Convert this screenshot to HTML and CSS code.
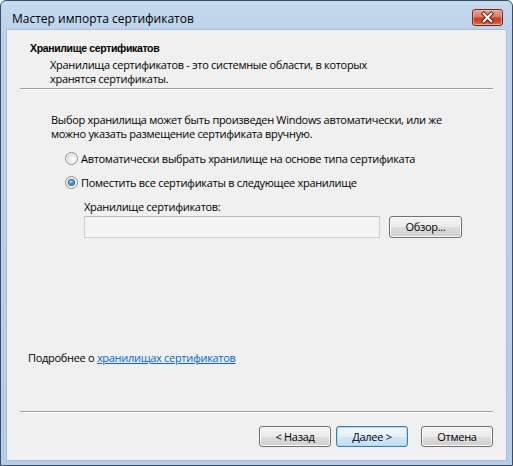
FILE: index.html
```html
<!DOCTYPE html>
<html lang="ru">
<head>
<meta charset="utf-8">
<title>Мастер импорта сертификатов</title>
<link rel="stylesheet" href="styles.css">
</head>
<body>
<div class="window">
  <div class="titlebar">
    <span class="title">Мастер импорта сертификатов</span>
    <span class="close">
      <svg width="31" height="17" viewBox="0 0 31 17">
        <path d="M11.5 4.5 L19.5 12.5 M19.5 4.5 L11.5 12.5" stroke="#5a1f14" stroke-width="4.2" stroke-linecap="square" fill="none"/>
        <path d="M11.5 4.5 L19.5 12.5 M19.5 4.5 L11.5 12.5" stroke="#ffffff" stroke-width="2.2" stroke-linecap="square" fill="none"/>
      </svg>
    </span>
  </div>
  <div class="client">
    <div class="header">
      <div class="h-title">Хранилище сертификатов</div>
      <div class="h-sub">Хранилища сертификатов - это системные области, в которых<br>хранятся сертификаты.</div>
    </div>
    <div class="sep"></div>
    <div class="body">
      <p class="intro">Выбор хранилища может быть произведен Windows автоматически, или же<br>можно указать размещение сертификата вручную.</p>
      <div class="options">
        <div class="radio"><span class="dot"></span><span>Автоматически выбрать хранилище на основе типа сертификата</span></div>
        <div class="radio checked"><span class="dot"></span><span>Поместить все сертификаты в следующее хранилище</span></div>
      </div>
      <div class="store">
        <div class="store-label">Хранилище сертификатов:</div>
        <div class="store-row">
          <div class="field"></div>
          <button class="btn browse">Обзор...</button>
        </div>
      </div>
    </div>
    <div class="more">Подробнее о <a class="link">хранилищах сертификатов</a></div>
    <div class="sep"></div>
    <div class="footer">
      <button class="btn back">&lt; Назад</button>
      <button class="btn default next">Далее &gt;</button>
      <button class="btn cancel">Отмена</button>
    </div>
  </div>
</div>
</body>
</html>
```
FILE: styles.css
```css
html, body {
  margin: 0;
  padding: 0;
  background: #ffffff;
}
body {
  font-family: "Open Sans", "Noto Sans", sans-serif;
  font-size: 11px;
  letter-spacing: -0.3px;
  color: #000;
}
.window {
  width: 513px;
  height: 466px;
  box-sizing: border-box;
  border: 1px solid #3b4d63;
  border-radius: 6px 6px 0 0;
  background: linear-gradient(#c6daef 0px, #bcd3ec 30px, #b4cde9 100%);
  display: flex;
  flex-direction: column;
  overflow: hidden;
}
.titlebar {
  height: 29px;
  flex: none;
  display: flex;
  align-items: flex-start;
  justify-content: space-between;
  padding-left: 11px;
}
.title {
  font-size: 12px;
  letter-spacing: 0;
  line-height: 14px;
  margin-top: 11px;
  color: #000;
  white-space: nowrap;
}
.close {
  width: 31px;
  height: 17px;
  margin-top: 8px;
  margin-right: 9px;
  box-sizing: border-box;
  border: 1px solid #6b2a1e;
  border-radius: 3px;
  background: linear-gradient(#eba08c 0%, #dc7a62 45%, #c83e22 55%, #cf4f32 80%, #e27d60 100%);
  box-shadow: inset 0 0 0 1px rgba(255, 200, 185, 0.55);
  display: flex;
  align-items: center;
  justify-content: center;
}
.close svg {
  display: block;
  margin-top: -1px;
}
.client {
  flex: 1;
  margin: 0 6px 5px 6px;
  background: #f0f0f0;
  display: flex;
  flex-direction: column;
  box-shadow: 0 0 0 1px #a9bfd8;
}
.header {
  padding: 11px 0 0 23px;
  height: 47px;
  flex: none;
}
.h-title {
  font-family: "Liberation Sans", Arial, sans-serif;
  font-weight: bold;
  font-size: 10.5px;
  letter-spacing: -0.35px;
  line-height: 14px;
  white-space: nowrap;
}
.h-sub {
  margin-top: 3px;
  padding-left: 20px;
  line-height: 14px;
  white-space: nowrap;
}
.sep {
  flex: none;
  height: 1px;
  border-bottom: 1px solid #ffffff;
  background: #a0a0a0;
  margin: 0 13px;
}
.body {
  flex: 1;
  padding-left: 44px;
}
.intro {
  margin: 23px 0 0 0;
  line-height: 14px;
  white-space: nowrap;
}
.options {
  padding-left: 14px;
  margin-top: 9px;
  display: flex;
  flex-direction: column;
  gap: 8px;
}
.radio {
  height: 16px;
  display: flex;
  align-items: center;
  gap: 3px;
  white-space: nowrap;
}
.dot {
  width: 13px;
  height: 13px;
  box-sizing: border-box;
  border-radius: 50%;
  border: 1px solid #8e9090;
  background: radial-gradient(circle at 65% 65%, #ffffff 0%, #f0f0f0 35%, #d2d2d2 75%, #c8c8c8 100%);
  box-shadow: inset 0 0 0 1px #f6f6f6;
  display: flex;
  align-items: center;
  justify-content: center;
  flex: none;
}
.radio.checked .dot::after {
  content: "";
  width: 5px;
  height: 5px;
  border-radius: 50%;
  background: radial-gradient(circle at 40% 35%, #9fd0f5 0%, #3a8ad4 55%, #1c5aa3 100%);
  box-shadow: 0 0 0 1px #2c628b;
}
.store {
  padding-left: 33px;
  margin-top: 10px;
}
.store-label {
  line-height: 14px;
  white-space: nowrap;
}
.store-row {
  margin-top: 2px;
  display: flex;
  gap: 9px;
}
.field {
  width: 296px;
  height: 22px;
  box-sizing: border-box;
  border: 1px solid #cfcfcf;
  border-top-color: #bcbcbc;
  background: #f4f4f4;
}
.btn {
  font-family: inherit;
  font-size: 11px;
  letter-spacing: -0.3px;
  color: #000;
  height: 22px;
  width: 73px;
  padding: 0;
  box-sizing: border-box;
  border: 1px solid #707070;
  border-radius: 3px;
  background: linear-gradient(#f2f2f2 0%, #ebebeb 50%, #dddddd 51%, #cfcfcf 100%);
  box-shadow: inset 0 0 0 1px #fbfbfb;
  line-height: 18px;
}
.btn.default {
  border-color: #3c7fb1;
  background: linear-gradient(#f0f7fc 0%, #e5f1fa 50%, #d3e7f5 51%, #c4def0 100%);
  box-shadow: inset 0 0 0 1px #a9dbf6;
}
.more {
  flex: none;
  line-height: 14px;
  padding-left: 21px;
  margin-bottom: 46px;
  white-space: nowrap;
}
.link {
  color: #0066cc;
  text-decoration: underline;
}
.footer {
  flex: none;
  display: flex;
  justify-content: flex-end;
  padding: 13px 13px 13px 0;
}
.footer .btn {
  width: 72px;
  height: 21px;
}
.footer .next {
  margin-left: 5px;
}
.footer .cancel {
  margin-left: 13px;
}
```
